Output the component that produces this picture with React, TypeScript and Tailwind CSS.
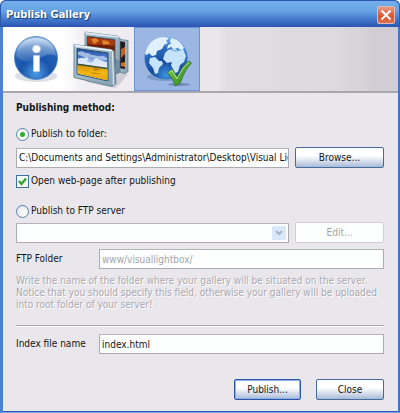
import type { ReactNode } from "react";

const InfoIcon = () => (
  <svg viewBox="0 0 48 50" className="w-12 h-[50px]" aria-hidden="true">
    <defs>
      <radialGradient id="infoBall" cx="0.5" cy="0.85" r="0.85">
        <stop offset="0" stopColor="#4e9be4" />
        <stop offset="0.4" stopColor="#1a55ac" />
        <stop offset="0.75" stopColor="#2462b6" />
        <stop offset="1" stopColor="#8fbdea" />
      </radialGradient>
      <linearGradient id="infoShine" x1="0" y1="0" x2="0" y2="1">
        <stop offset="0" stopColor="#fff" stopOpacity="0.6" />
        <stop offset="1" stopColor="#fff" stopOpacity="0.08" />
      </linearGradient>
    </defs>
    <ellipse cx="24" cy="42" rx="21" ry="6" fill="#b9bfca" opacity="0.5" />
    <circle cx="24" cy="24" r="21.5" fill="url(#infoBall)" stroke="#4a82c4" strokeWidth="0.8" />
    <path d="M4 22C5 10 13 4 24 4s19 6 20 18c-10-5-16 4-22 5S9 28 4 22z" fill="url(#infoShine)" />
    <circle cx="24.5" cy="15" r="4" fill="#fff" stroke="#a9c0df" strokeWidth="0.6" />
    <path d="M21.5 21.5h6v16h-6z" fill="#fff" stroke="#c4cfdf" strokeWidth="0.6" />
  </svg>
);

const GalleryIcon = () => (
  <svg viewBox="0 0 58 60" className="w-[58px] h-[60px]" aria-hidden="true">
    <defs>
      <linearGradient id="sky" x1="0" y1="0" x2="0" y2="1">
        <stop offset="0" stopColor="#2450a8" />
        <stop offset="0.45" stopColor="#5f8fd6" />
        <stop offset="0.7" stopColor="#d2e2f5" />
      </linearGradient>
      <linearGradient id="field" x1="0" y1="0" x2="0" y2="1">
        <stop offset="0" stopColor="#d08a08" />
        <stop offset="0.5" stopColor="#f2b714" />
        <stop offset="1" stopColor="#e6a30f" />
      </linearGradient>
      <linearGradient id="rim" x1="0" y1="0" x2="1" y2="1">
        <stop offset="0" stopColor="#b3cbd9" />
        <stop offset="1" stopColor="#86a1b3" />
      </linearGradient>
    </defs>
    <path d="M12 53l30 6 4-3 9-11-6-3z" fill="#9fa3ab" opacity="0.4" />
    <path d="M44 10l11 1.500v31l-3 2-8-2z" fill="url(#rim)" stroke="#5c7689" strokeWidth="0.7" />
    <path d="M46 12l6 1v27l-6-1z" fill="#241a1c" />
    <path d="M48 20l4-2v7l-4 4z" fill="#c0621c" />
    <path d="M48 34l4-1v5l-4-1z" fill="#c87822" />
    <path d="M12 3l32 4 3 2v34l-4 2-31-4z" fill="url(#rim)" stroke="#5c7689" strokeWidth="0.7" />
    <path d="M12 3l32 4 3 2-3-.5L13 5z" fill="#e0ebf1" />
    <path d="M14 7l28 3.500v29L14 36z" fill="#6d1f0c" stroke="#3f647c" strokeWidth="0.8" />
    <path d="M14.500 8l27 3.300v5c-5 2-8-2-13-1s-9 1-14-1z" fill="#a63c10" />
    <path d="M18 10l5-1 3 3-5 3zM29 11l6 1 2 3-7 1z" fill="#e2822a" />
    <path d="M38 21l3.500 1v12l-3.500 1z" fill="#c96c1c" />
    <path d="M41.500 30l5.500 1v12l-4 2z" fill="#567389" opacity="0.5" />
    <path d="M1 15.500l37 5 3 2 2 32-4 3-38-9z" fill="url(#rim)" stroke="#567389" strokeWidth="0.8" />
    <path d="M1 15.500l37 5 3 2-3-.3L2 17.500z" fill="#eaf2f6" />
    <path d="M39.500 23l1 33" stroke="#d9e6ed" strokeWidth="1.200" />
    <path d="M4 19.500l31 4.500v28L4 45z" fill="url(#sky)" stroke="#274f6b" strokeWidth="1" />
    <path d="M5 23c4-2 6 1 9 1s3 2 6 2 5 2 8 1 4 2 6 2v2c-4 1-7-1-10-1s-6-2-9-1-6-3-10-3z" fill="#c2d6f1" opacity="0.75" />
    <path d="M5 30c3-2 5 0 8-1s5 3 8 1 7 2 13 3v6L5 35z" fill="#f3f8fe" opacity="0.85" />
    <path d="M16 27c2 2 4 0 5 3s-2 2-3 4l-4-2z" fill="#80a8dc" opacity="0.7" />
    <path d="M4.500 35l30 4.500v12L4.500 44.500z" fill="url(#field)" />
    <path d="M4.500 34.500l30 4.300v1.400l-30-4.200z" fill="#38533b" />
    <path d="M20 39l5-1 2 3-5 1zM7 41l8 1 6 3 8 0" fill="#ac6a10" opacity="0.6" />
  </svg>
);

const GlobeIcon = () => (
  <svg viewBox="-2 0 52 52" className="w-[52px] h-[52px]" aria-hidden="true">
    <defs>
      <radialGradient id="ocean" cx="0.5" cy="0.9" r="0.9">
        <stop offset="0" stopColor="#3e94e4" />
        <stop offset="0.35" stopColor="#174b9c" />
        <stop offset="0.7" stopColor="#2b6bc0" />
        <stop offset="1" stopColor="#7cb0e8" />
      </radialGradient>
      <linearGradient id="tick" x1="0" y1="0" x2="1" y2="1">
        <stop offset="0" stopColor="#9ad65c" />
        <stop offset="0.5" stopColor="#55a632" />
        <stop offset="1" stopColor="#2a7d1a" />
      </linearGradient>
    </defs>
    <ellipse cx="22" cy="42" rx="18" ry="4" fill="#54729f" opacity="0.4" />
    <ellipse cx="36" cy="49.500" rx="11" ry="1.500" fill="#48679a" opacity="0.6" />
    <circle cx="23" cy="23" r="21.500" fill="url(#ocean)" />
    <path d="M2 19C4 9 11 2 21 2l5 1-3 3 2 2-4 2-2 4-5 2-1 4-4 1-3-3-2 2z" fill="#e0f0fc" />
    <path d="M7 23l5-1 4 4h3l1 3-4 4-1 5-3 1-2-6-4-5z" fill="#c5e4fb" />
    <path d="M28 3c6 1 11 5 13 10l-3 3-3-3-4 1-3-2-4 2 1-4 3-1-1-3z" fill="#dceffc" />
    <path d="M25 15l6-2 4 2 5-1 3 7-2 6-4 3-2 7-3 1-4-8 1-3-5 1-4-4 2-6z" fill="#c5e4fb" />
    <path d="M27 14l5 2 6-1" stroke="#5f9ad8" strokeWidth="1" fill="none" />
    <path d="M24.500 37.500l5-3 5 7.500c3-7 6-12 11.500-16l2.500 2c-6 7-9 13-11 20l-5.500 3c-1-5-4-9-7.500-13.500z" fill="url(#tick)" stroke="#2b7223" strokeWidth="0.7" />
    <path d="M26 37.500l3-2 5 8.500c3-7 7-13 12-16.500" fill="none" stroke="#c9efa0" strokeWidth="0.8" />
  </svg>
);

const fieldClass =
  "h-5 min-w-0 border border-[#acabb2] border-t-[#b5b3bb] bg-[#fcfffe] pl-[2px] pr-0 text-[10px] leading-4 outline-none";

const XpButton = ({
  children,
  className,
  disabled,
}: {
  children: ReactNode;
  className: string;
  disabled?: boolean;
}) => (
  <button
    type="button"
    disabled={disabled}
    className={`h-[21px] shrink-0 rounded-[2px] border text-center text-[10px] leading-4 ${className}`}
  >
    {children}
  </button>
);

const normalButton =
  "border-[#466b9c] bg-linear-to-b from-white from-40% via-[#dde4f0] via-65% to-[#a9bbd8]";

const Radio = ({
  id,
  checked,
  children,
}: {
  id: string;
  checked?: boolean;
  children: ReactNode;
}) => (
  <div className="flex h-5 items-center gap-[2px]">
    <input
      id={id}
      type="radio"
      name="method"
      defaultChecked={checked}
      className="size-[13px] appearance-none rounded-full border border-[#5580ab] bg-[radial-gradient(circle_at_70%_70%,#ffffff,#dfe2e6)] checked:bg-[radial-gradient(circle,#2fae2b_2px,#f5fcf4_3px)]"
    />
    <label htmlFor={id}>{children}</label>
  </div>
);

const Toolbar = () => (
  <nav className="flex h-[66px] border-b-2 border-[#aaa8ad] bg-linear-to-r from-white from-15% via-[#f1eff3] via-20% to-[#e9e6ec] to-50%">
    <button type="button" aria-label="Information" className="flex w-[66px] items-center justify-center">
      <InfoIcon />
    </button>
    <button type="button" aria-label="Images" className="flex w-[65px] items-center justify-center">
      <GalleryIcon />
    </button>
    <button
      type="button"
      aria-label="Publish"
      className="flex w-[66px] items-center justify-center border border-[#6793d6] bg-[#9cb6e3] pt-1"
    >
      <GlobeIcon />
    </button>
    <div className="flex-1 bg-[linear-gradient(to_right,#e9e6ec_9%,#e0dee3_14%,#dfdde2_39%,#dddbe0_41%,#dcdadf_69%,#d8d6db_74%,#d6d4d9_83%,#d2cdd4_87%)]" />
  </nav>
);

const App = () => {
  return (
    <main className="w-full rounded-t-md bg-[#3f6fc8] font-['DejaVu_Sans_Condensed','DejaVu_Sans',sans-serif] text-[10px] leading-4 text-[#151515]">
      <header className="flex h-[27px] items-center justify-between rounded-t-md border-x border-t border-[#2c58b0] bg-linear-to-b from-[#74aeea] via-[#69a5e6] via-35% to-[#2a54b4] pt-px pl-[5px] pr-1">
        <h1 className="text-[11px] font-bold text-white [text-shadow:1px_1px_1px_#173a7d]">
          Publish Gallery
        </h1>
        <button
          type="button"
          aria-label="Close window"
          className="flex size-[18px] items-center justify-center rounded-[2px] border border-[#dfb9b5] bg-linear-to-b from-[#e39a83] via-[#d9512b] via-60% to-[#df7350]"
        >
          <svg viewBox="0 0 12 12" className="size-3" aria-hidden="true">
            <path d="M1.500 1.500l9 9m0-9l-9 9" stroke="#fff" strokeWidth="2" />
          </svg>
        </button>
      </header>

      <div className="border-b border-l-3 border-r-2 border-b-[#75a6e4] border-l-[#4b80d6] border-r-[#4573c8]">
        <div className="border-b border-[#3059b3] bg-[#e9e7ec]">
          <Toolbar />
          <form className="flex flex-col pt-[5px] pr-[14px] pb-[11px] pl-[13px]">
            <h2 className="h-5 font-bold leading-5">Publishing method:</h2>

            <div className="pt-[6px]">
              <Radio id="folder" checked>
                Publish to folder:
              </Radio>
            </div>
            <div className="flex items-center gap-[6px] pt-[3px]">
              <input
                aria-label="Publish folder"
                defaultValue="C:\Documents and Settings\Administrator\Desktop\Visual Ligl"
                className={`${fieldClass} flex-1`}
              />
              <XpButton className={`${normalButton} w-[89px]`}>Browse...</XpButton>
            </div>

            <div className="flex h-[26px] items-center gap-[2px]">
              <input
                id="open"
                type="checkbox"
                defaultChecked
                className="peer size-[13px] appearance-none border border-[#41719e] bg-[#f6faf6]"
              />
              <svg viewBox="0 0 13 13" className="-ml-[15px] hidden size-[13px] pointer-events-none peer-checked:block" aria-hidden="true">
                <path d="M3 6l2.500 3L10 3.500" fill="none" stroke="#27a327" strokeWidth="2.200" />
              </svg>
              <label htmlFor="open">Open web-page after publishing</label>
            </div>

            <div className="pt-[7px]">
              <Radio id="ftp">Publish to FTP server</Radio>
            </div>
            <div className="flex items-center gap-[6px] pt-px">
              <div className="relative flex flex-1">
                <select
                  aria-label="FTP server"
                  disabled
                  className={`${fieldClass} flex-1 appearance-none opacity-100`}
                />
                <span className="pointer-events-none absolute top-[3px] right-[3px] flex size-[14px] items-center justify-center rounded-[1px] bg-[#d9e8f6]">
                  <svg viewBox="0 0 8 6" className="h-[6px] w-2" aria-hidden="true">
                    <path d="M1 1l3 3 3-3" fill="none" stroke="#aab4c4" strokeWidth="2" />
                  </svg>
                </span>
              </div>
              <XpButton disabled className="w-[89px] border-[#d3cdd8] bg-[#fcfffe] text-[#a5a3aa]">
                Edit...
              </XpButton>
            </div>

            <div className="flex items-center pt-[6px]">
              <label htmlFor="dir" className="w-[83px] shrink-0">
                FTP Folder
              </label>
              <input
                id="dir"
                disabled
                defaultValue="www/visuallightbox/"
                className={`${fieldClass} flex-1 text-[#a5a3aa]`}
              />
            </div>

            <p className="pt-[6px] leading-3 text-[#aaa8b0] [text-shadow:1px_1px_0_#fff]">
              Write the name of the folder where your gallery will be situated on the server.
              <br />
              Notice that you should specify this field, otherwise your gallery will be uploaded
              <br />
              into root folder of your server!
            </p>

            <hr className="mt-[14px] h-[2px] border-t border-b border-t-[#aaa8ad] border-b-white" />

            <div className="flex items-center pt-[7px]">
              <label htmlFor="index" className="w-[83px] shrink-0">
                Index file name
              </label>
              <input id="index" defaultValue="index.html" className={`${fieldClass} flex-1`} />
            </div>

            <div className="flex justify-end gap-[15px] pt-[25px]">
              <XpButton className="w-[67px] border-[#2c55a8] bg-linear-to-b from-white from-40% via-[#dde4f0] via-65% to-[#a9bbd8] shadow-[inset_0_0_0_1px_#8fb0e6]">
                Publish...
              </XpButton>
              <XpButton className={`${normalButton} w-[68px]`}>Close</XpButton>
            </div>
          </form>
        </div>
      </div>
    </main>
  );
};

export default App;
